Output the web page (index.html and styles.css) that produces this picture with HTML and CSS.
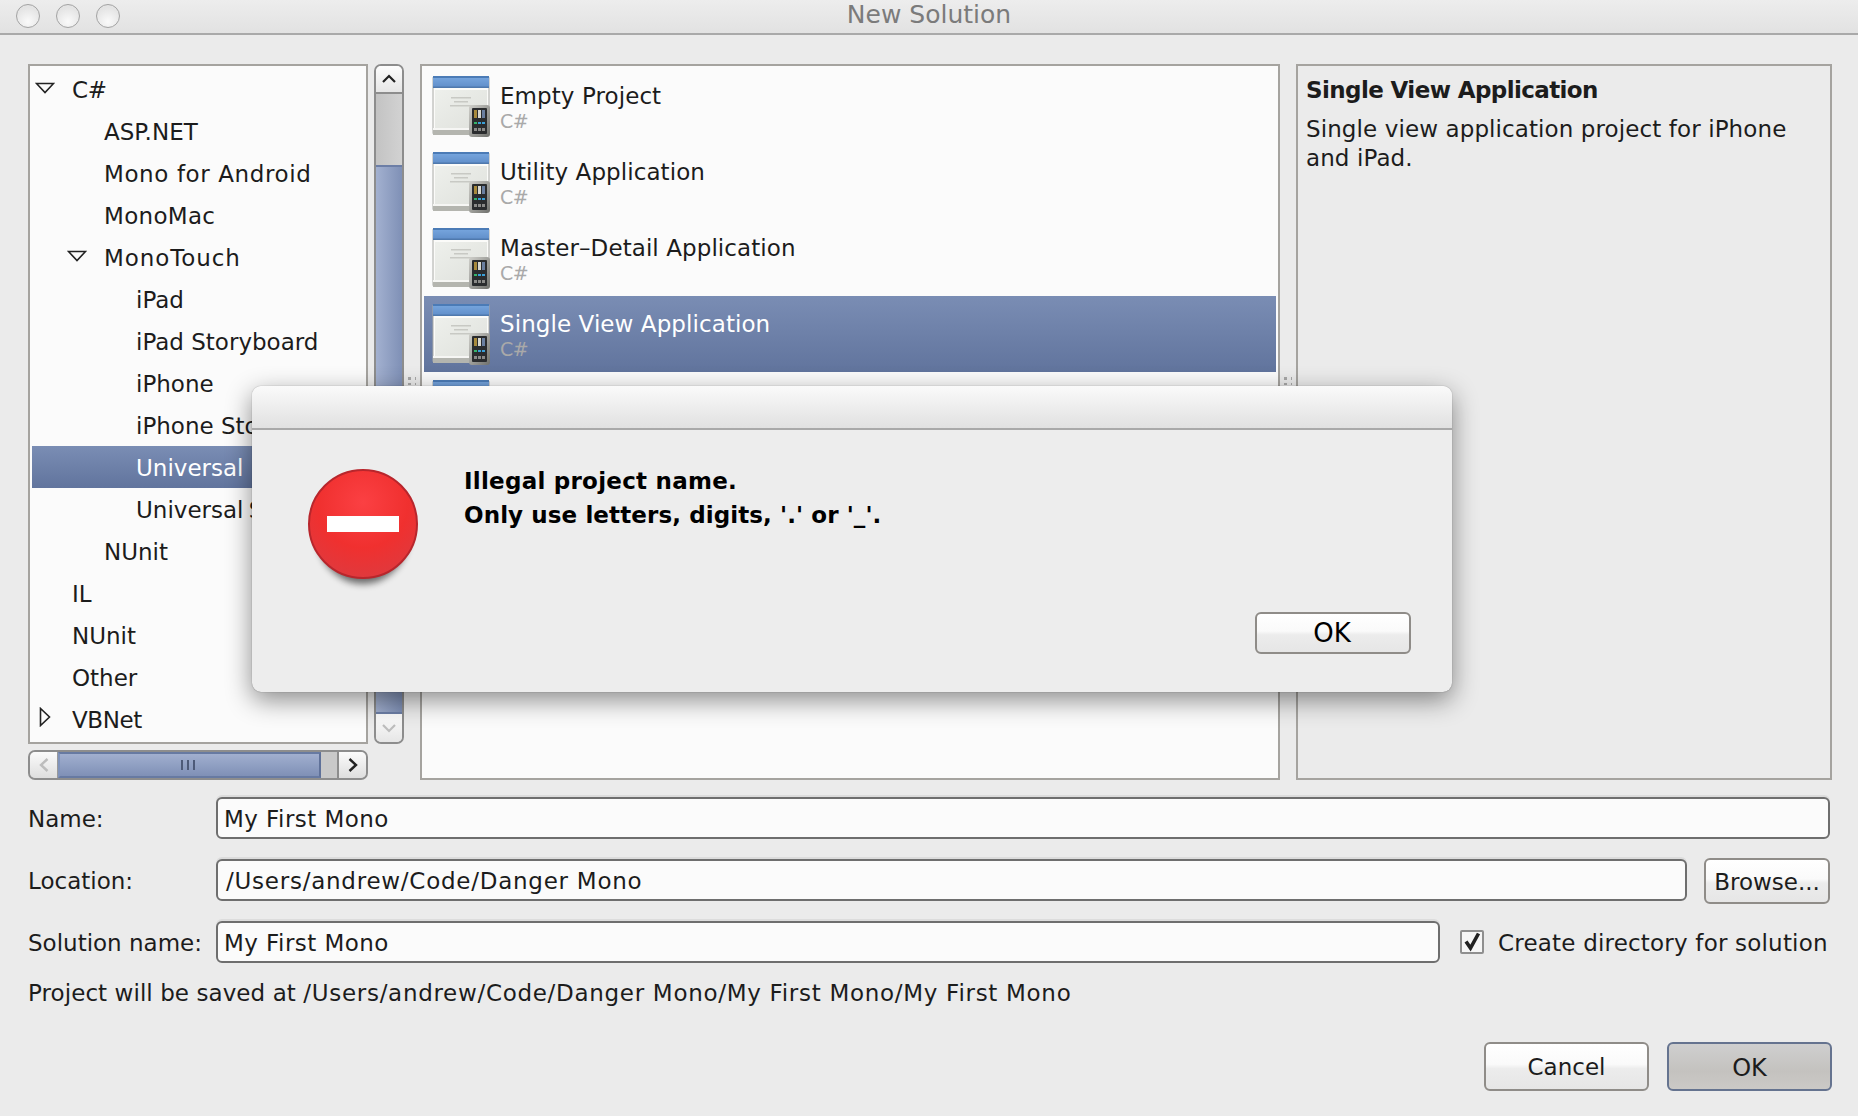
FILE: index.html
```html
<!DOCTYPE html>
<html lang="en">
<head>
<meta charset="utf-8">
<title>New Solution</title>
<link rel="stylesheet" href="styles.css">
</head>
<body>
<svg class="defs" width="0" height="0">
  <defs>
    <linearGradient id="bluebar" x1="0" y1="0" x2="0" y2="1"><stop offset="0" stop-color="#79a8e0"/><stop offset="1" stop-color="#5f8dc8"/></linearGradient>
    <linearGradient id="pane" x1="0" y1="0" x2="1" y2="1"><stop offset="0" stop-color="#eef0ec"/><stop offset="1" stop-color="#dfe1dc"/></linearGradient>
    <linearGradient id="phone" x1="0" y1="0" x2="1" y2="1"><stop offset="0" stop-color="#cfcfca"/><stop offset="1" stop-color="#6f706c"/></linearGradient>
    <symbol id="tpl" viewBox="0 0 60 62">
      <rect x="1" y="0.5" width="56" height="58" rx="1.5" fill="#fbfbf9" stroke="#a9aaa6"/>
      <rect x="1" y="0" width="56" height="12" rx="1.5" fill="url(#bluebar)"/>
      <rect x="1" y="0" width="56" height="2" fill="#4b7bb6"/>
      <rect x="1" y="10.5" width="56" height="1.5" fill="#4f79ad"/>
      <rect x="3" y="14" width="52" height="38" fill="url(#pane)"/>
      <rect x="1" y="52" width="56" height="7" fill="#b4b5af"/>
      <rect x="1" y="52" width="56" height="2" fill="#f6f6f4"/>
      <rect x="19" y="21" width="20" height="1.5" fill="#c8c9c4"/>
      <rect x="22" y="25" width="14" height="1.5" fill="#c8c9c4"/>
      <rect x="18" y="29" width="22" height="1.5" fill="#c8c9c4"/>
      <rect x="37" y="29" width="21" height="32" rx="3" fill="url(#phone)"/>
      <rect x="40" y="32" width="15" height="26" rx="1" fill="#2a2c2e"/>
      <rect x="42" y="34" width="3" height="8" fill="#a88a3c"/>
      <rect x="46" y="34" width="3" height="8" fill="#d8d8d0"/>
      <rect x="50" y="34" width="3" height="8" fill="#6a7fa0"/>
      <rect x="42" y="46" width="3" height="2" fill="#35b46a"/>
      <rect x="46" y="46" width="3" height="2" fill="#3aa0d8"/>
      <rect x="50" y="46" width="3" height="2" fill="#3aa0d8"/>
      <rect x="42" y="52" width="3" height="3" fill="#8a8a88"/>
      <rect x="46" y="52" width="3" height="3" fill="#8a8a88"/>
      <rect x="50" y="52" width="3" height="3" fill="#8a8a88"/>
    </symbol>
  </defs>
</svg>

<div class="window">
  <header class="titlebar">
    <div class="lights"><span class="light"></span><span class="light"></span><span class="light"></span></div>
    <div class="title">New Solution</div>
  </header>

  <main class="panes">
    <section class="tree-col">
      <ul class="tree">
        <li class="row l0 tight"><svg class="tw" viewBox="0 0 20 12"><path d="M1.500 1.500h17L10 10.500z" fill="none" stroke="#222" stroke-width="1.600"/></svg>C#</li>
        <li class="row l1">ASP.NET</li>
        <li class="row l1 wide">Mono for Android</li>
        <li class="row l1 mid">MonoMac</li>
        <li class="row l1 wider"><svg class="tw" viewBox="0 0 20 12"><path d="M1.500 1.500h17L10 10.500z" fill="none" stroke="#222" stroke-width="1.600"/></svg>MonoTouch</li>
        <li class="row l2">iPad</li>
        <li class="row l2">iPad Storyboard</li>
        <li class="row l2">iPhone</li>
        <li class="row l2">iPhone Storyboard</li>
        <li class="row l2 sel">Universal</li>
        <li class="row l2 close">Universal Storyboard</li>
        <li class="row l1">NUnit</li>
        <li class="row l0">IL</li>
        <li class="row l0">NUnit</li>
        <li class="row l0">Other</li>
        <li class="row l0 tight"><svg class="tw tw-side" viewBox="0 0 12 20"><path d="M1.500 1.500v17L10.500 10z" fill="none" stroke="#222" stroke-width="1.600"/></svg>VBNet</li>
      </ul>
      <div class="hscroll">
        <div class="hbtn hbtn-l"><svg width="12" height="16" viewBox="0 0 12 16"><path d="M9.500 2L3 8l6.500 6" fill="none" stroke="#bdbdbd" stroke-width="2.400"/></svg></div>
        <div class="hthumb"><i></i><i></i><i></i></div>
        <div class="htrack"></div>
        <div class="hbtn hbtn-r"><svg width="12" height="16" viewBox="0 0 12 16"><path d="M2.500 2L9 8l-6.500 6" fill="none" stroke="#222" stroke-width="2.400"/></svg></div>
      </div>
    </section>

    <div class="vscroll">
      <div class="vbtn vbtn-u"><svg width="16" height="10" viewBox="0 0 16 10"><path d="M2 8l6-6 6 6" fill="none" stroke="#222" stroke-width="2.200"/></svg></div>
      <div class="vtrack"></div>
      <div class="vthumb"></div>
      <div class="vbtn vbtn-d"><svg width="16" height="10" viewBox="0 0 16 10"><path d="M2 2l6 6 6-6" fill="none" stroke="#bdbdbd" stroke-width="2.200"/></svg></div>
    </div>

    <div class="grip"><span class="dots"></span></div>

    <section class="list">
      <div class="item">
        <svg class="tpl"><use href="#tpl"/></svg>
        <div class="item-text"><div class="item-name">Empty Project</div><div class="item-lang">C#</div></div>
      </div>
      <div class="item">
        <svg class="tpl"><use href="#tpl"/></svg>
        <div class="item-text"><div class="item-name">Utility Application</div><div class="item-lang">C#</div></div>
      </div>
      <div class="item">
        <svg class="tpl"><use href="#tpl"/></svg>
        <div class="item-text"><div class="item-name">Master–Detail Application</div><div class="item-lang">C#</div></div>
      </div>
      <div class="item item-sel">
        <svg class="tpl"><use href="#tpl"/></svg>
        <div class="item-text"><div class="item-name">Single View Application</div><div class="item-lang">C#</div></div>
      </div>
      <div class="item">
        <svg class="tpl"><use href="#tpl"/></svg>
      </div>
    </section>

    <div class="grip"><span class="dots"></span></div>

    <aside class="info">
      <h2 class="info-title">Single View Application</h2>
      <p class="info-desc">Single view application project for iPhone and iPad.</p>
    </aside>
  </main>

  <form class="form">
    <div class="frow">
      <label class="flabel">Name:</label>
      <div class="input input-grow">My First Mono</div>
    </div>
    <div class="frow">
      <label class="flabel">Location:</label>
      <div class="input input-grow input-path">/Users/andrew/Code/Danger Mono</div>
      <div class="btn btn-browse">Browse...</div>
    </div>
    <div class="frow">
      <label class="flabel">Solution name:</label>
      <div class="input input-sol">My First Mono</div>
      <div class="check"><svg width="20" height="20" viewBox="0 0 20 20"><path d="M4 9.500l4.500 6.500L16.500 1.500" fill="none" stroke="#222" stroke-width="3.600"/></svg></div>
      <span class="check-label">Create directory for solution</span>
    </div>
    <p class="saved"><span class="saved-lead">Project will be saved at </span><span class="saved-path">/Users/andrew/Code/Danger Mono/My First Mono/My First Mono</span></p>
  </form>

  <footer class="actions">
    <div class="btn btn-act">Cancel</div>
    <div class="btn btn-act btn-default">OK</div>
  </footer>
</div>

<div class="dialog">
  <div class="dlg-head"></div>
  <div class="dlg-body">
    <svg class="stop" width="130" height="130" viewBox="0 0 130 130">
      <defs>
        <radialGradient id="red" cx="0.5" cy="0.3" r="0.7"><stop offset="0" stop-color="#fb4043"/><stop offset="0.6" stop-color="#f0302f"/><stop offset="1" stop-color="#e0393d"/></radialGradient>
        <filter id="blur" x="-30%" y="-30%" width="160%" height="160%"><feGaussianBlur stdDeviation="3.500"/></filter>
      </defs>
      <ellipse cx="65" cy="70" rx="46" ry="50" fill="#000" opacity="0.55" filter="url(#blur)"/>
      <circle cx="65" cy="60" r="54" fill="url(#red)" stroke="#b8262c" stroke-width="2"/>
      <rect x="29" y="52" width="72" height="16" fill="#fff"/>
    </svg>
    <div class="dlg-msg">Illegal project name.<br><span class="dlg-msg2">Only use letters, digits, '.' or '_'.</span></div>
    <div class="btn btn-dlg">OK</div>
  </div>
</div>
</body>
</html>
```

FILE: styles.css
```css
* { box-sizing: border-box; }
html, body { margin: 0; padding: 0; height: 100%; }
body {
  background: #ebebeb;
  font-family: "DejaVu Sans", "Liberation Sans", sans-serif;
  font-size: 23px;
  color: #1c1c1c;
  overflow: hidden;
  position: relative;
}
.defs { position: absolute; }
.window { width: 1858px; height: 1116px; display: flex; flex-direction: column; }

.titlebar {
  height: 35px;
  flex: none;
  border-bottom: 2px solid #a9a9a9;
  background: linear-gradient(#ededed, #e2e2e2);
  display: flex;
  align-items: center;
  position: relative;
}
.lights { display: flex; gap: 16px; padding-left: 16px; margin-top: -2px; }
.light {
  width: 24px; height: 24px; border-radius: 50%;
  border: 1.500px solid #a3a3a3;
  background: radial-gradient(circle at 50% 75%, #fafafa, #e4e4e4 70%);
}
.title {
  position: absolute; left: 0; right: 0; top: 0;
  text-align: center;
  font-size: 25px;
  line-height: 30px;
  color: #7b7b7b;
}

.panes { height: 716px; margin-top: 29px; padding-left: 28px; display: flex; flex: none; }

.tree-col { width: 340px; display: flex; flex-direction: column; gap: 6px; }
.tree {
  list-style: none; margin: 0; padding: 2px;
  height: 680px; flex: none;
  border: 2px solid #a5a39f;
  background: #fbfbfb;
  overflow: hidden;
}
.row { height: 42px; line-height: 44px; white-space: nowrap; position: relative; }
.l0 { padding-left: 40px; }
.l1 { padding-left: 72px; }
.l2 { padding-left: 104px; }
.wide { letter-spacing: 0.6px; }
.wider { letter-spacing: 0.9px; }
.mid { letter-spacing: 0.3px; }
.tight { letter-spacing: -0.4px; }
.close { word-spacing: -2px; }
.sel { background: linear-gradient(#7a8db4, #61749d); color: #fff; }
.tw { position: absolute; width: 20px; height: 12px; top: 14px; }
.l0 .tw { left: 3px; }
.l1 .tw { left: 35px; }
.tw-side { width: 12px; height: 20px; left: 7px !important; top: 9px; }

.hscroll {
  height: 30px; flex: none;
  border: 2px solid #8d8d8d; border-radius: 7px;
  display: flex; overflow: hidden;
  background: #c9c9c9;
}
.hbtn { width: 28px; display: flex; align-items: center; justify-content: center; background: linear-gradient(#fbfbfb, #dedede); }
.hbtn-l { border-right: 1px solid #9a9a9a; }
.hbtn-r { border-left: 2px solid #8d8d8d; width: 29px; }
.hthumb {
  width: 263px; display: flex; gap: 4px; align-items: center; justify-content: center;
  padding-right: 4px;
  background: linear-gradient(#a1afcf, #7f90b6);
  border: 2px solid #8194bb; border-top-color: #677aa2; border-bottom-color: #677aa2;
  border-right-color: #5f7199;
}
.hthumb i { width: 2px; height: 10px; background: #4d5a78; }
.htrack { flex: 1; }

.vscroll {
  width: 30px; height: 680px; margin-left: 6px; flex: none;
  border: 2px solid #8d8d8d; border-radius: 7px;
  display: flex; flex-direction: column; overflow: hidden;
}
.vbtn { height: 28px; flex: none; display: flex; align-items: center; justify-content: center; background: linear-gradient(#fdfdfd, #e6e6e6); }
.vbtn-u { border-bottom: 2px solid #8d8d8d; }
.vtrack { height: 71px; flex: none; background: linear-gradient(90deg, #c3c3c3, #d2d2d2); }
.vthumb {
  flex: 1;
  background: linear-gradient(90deg, #a3b1d0, #7f90b6);
  border-top: 2px solid #6c7ea6; border-bottom: 2px solid #6c7ea6;
}

.grip { width: 16px; flex: none; position: relative; }
.dots {
  position: absolute; left: 4px; top: 313px; width: 8px; height: 8px;
  background:
    radial-gradient(circle at 1.500px 1.500px, #a8a8a8 1.500px, transparent 1.600px) 0 0 / 7px 6px;
}

.list {
  width: 860px; height: 716px; flex: none;
  border: 2px solid #a5a39f;
  padding: 2px;
  background: #fbfbfb;
  overflow: hidden;
}
.item { height: 76px; display: flex; padding: 8px 0 0 8px; overflow: hidden; }
.item-sel { background: linear-gradient(#7a8db4, #61749d); color: #fff; }
.tpl { width: 60px; height: 62px; flex: none; }
.item-text { margin-left: 8px; padding-top: 9px; }
.item-name { line-height: 26px; margin-top: -2px; white-space: nowrap; letter-spacing: 0.08px; }
.item-lang { font-size: 19px; line-height: 24px; color: #a9a9a9; letter-spacing: -0.6px; }

.info { width: 536px; height: 716px; flex: none; border: 2px solid #a5a39f; padding: 7px 6px 7px 8px; }
.info-title { margin: 0; font-size: 23px; font-weight: bold; line-height: 34px; letter-spacing: -0.6px; }
.info-desc { margin: 8px 0 0; font-size: 23px; line-height: 28.500px; letter-spacing: 0.1px; }

.form { margin-top: 17px; padding: 0 28px; display: flex; flex-direction: column; gap: 20px; flex: none; }
.frow { height: 42px; display: flex; align-items: center; width: 1802px; }
.flabel { width: 188px; flex: none; white-space: nowrap; padding-top: 2px; }
.input {
  height: 42px; border: 2px solid #6e6e6e; border-radius: 6px;
  background: #fbfbfb; padding-left: 6px; line-height: 41px;
  box-shadow: 0 -2px 0 #dcdcdc;
  white-space: nowrap;
  letter-spacing: 0.45px;
}
.input-grow { flex: 1; }
.input-path { letter-spacing: 0.75px; padding-left: 8px; }
.input-sol { width: 1224px; flex: none; }
.btn {
  border: 2px solid #8f8c88; border-radius: 6px;
  background: linear-gradient(#ffffff, #fafafa 45%, #ececec 55%, #e6e6e6);
  display: flex; align-items: center; justify-content: center;
  white-space: nowrap;
}
.btn-browse { width: 126px; height: 46px; margin: 2px 0 0 17px; flex: none; padding-top: 1px; }
.check {
  width: 24px; height: 24px; margin-left: 20px; flex: none;
  border: 2px solid #8f8f8f; border-radius: 2px; background: #f6f6f6;
  display: flex; align-items: center; justify-content: center;
}
.check-label { margin-left: 14px; white-space: nowrap; letter-spacing: 0.2px; padding-top: 2px; }
.saved { margin: -6px 0 0; line-height: 32px; white-space: nowrap; }
.saved-lead { letter-spacing: 0.07px; }
.saved-path { letter-spacing: 0.7px; }

.actions { display: flex; justify-content: flex-end; gap: 18px; padding-right: 26px; margin-top: 33px; }
.btn-act { width: 165px; height: 49px; }
.btn-default {
  background: linear-gradient(#cfcfcf, #c4c2bf 60%, #cbc9c6);
  border-color: #65738f;
  font-size: 24px;
  padding-top: 3px;
}

.dialog {
  position: absolute; left: 252px; top: 386px; width: 1200px; height: 306px;
  border-radius: 9px;
  background: #ededed;
  box-shadow: 0 8px 26px rgba(0,0,0,0.45), 0 0 1px rgba(0,0,0,0.5);
  overflow: hidden;
  display: flex; flex-direction: column;
}
.dlg-head { height: 44px; flex: none; background: linear-gradient(#fafafa, #e1e1e1); border-bottom: 2px solid #a9a9a9; }
.dlg-body { flex: 1; position: relative; }
.stop { position: absolute; left: 46px; top: 34px; }
.dlg-msg { position: absolute; left: 212px; top: 34px; font-weight: bold; font-size: 23px; line-height: 34px; color: #000; white-space: nowrap; letter-spacing: 0.25px; }
.dlg-msg2 { letter-spacing: 0.1px; }
.btn-dlg { position: absolute; left: 1003px; top: 182px; width: 156px; height: 42px; color: #000; font-size: 26px; padding-right: 2px; }
```
